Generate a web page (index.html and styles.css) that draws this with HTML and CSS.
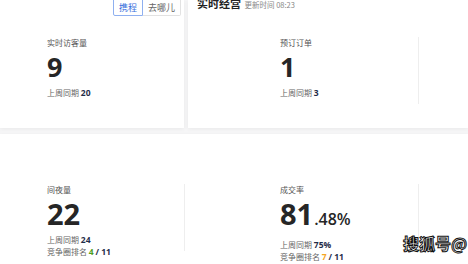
FILE: index.html
```html
<!DOCTYPE html>
<html lang="zh">
<head>
  <meta charset="UTF-8" />
  <title>实时经营</title>
  <link rel="stylesheet" href="styles.css">
</head>
<body>
  <div class="top-row">
    <div class="card card-left">
      <div class="tabs">
        <button class="tab active">携程</button>
        <button class="tab">去哪儿</button>
      </div>
      <div class="stat stat-first">
        <div class="stat-label">实时访客量</div>
        <div class="stat-value">9</div>
        <div class="stat-sub">上周同期 <b>20</b></div>
      </div>
    </div>

    <div class="card card-right">
      <div class="card-title">实时经营 <span class="updated">更新时间 08:23</span></div>
      <div class="cols">
        <div class="col col-mid">
          <div class="stat">
            <div class="stat-label">预订订单</div>
            <div class="stat-value">1</div>
            <div class="stat-sub">上周同期 <b>3</b></div>
          </div>
        </div>
      </div>
    </div>
  </div>

  <div class="card card-bottom">
    <div class="col col-first">
      <div class="stat stat-first">
        <div class="stat-label">间夜量</div>
        <div class="stat-value">22</div>
        <div class="stat-sub">上周同期 <b>24</b></div>
        <div class="stat-sub">竞争圈排名 <b class="green">4</b> <b>/ 11</b></div>
      </div>
    </div>
    <div class="col col-mid">
      <div class="stat">
        <div class="stat-label">成交率</div>
        <div class="stat-value">81<small>.48%</small></div>
        <div class="stat-sub">上周同期 <b>75%</b></div>
        <div class="stat-sub">竞争圈排名 <b class="orange">7</b> <b>/ 11</b></div>
      </div>
    </div>
  </div>

  <div class="watermark">搜狐号@</div>
</body>
</html>
```

FILE: styles.css
```css
body {
  margin: 0;
  width: 468px;
  height: 264px;
  overflow: hidden;
  position: relative;
  background: #f6f6f7;
  font-family: "Noto Sans", "Noto Sans CJK SC", sans-serif;
  color: #333;
}
.top-row {
  display: flex;
  gap: 4px;
  height: 128px;
}
.card {
  background: #fff;
  box-shadow: 0 1px 4px rgba(0, 0, 0, 0.06);
}
.card-left {
  width: 184px;
  flex: none;
}
.card-right {
  flex: 1;
}
.tabs {
  display: flex;
  justify-content: flex-end;
  margin: -8px 3px 0 0;
}
.tab {
  font-family: "Noto Sans CJK SC", sans-serif;
  font-size: 9px;
  height: 24px;
  padding: 8px 5px 0;
  line-height: 12px;
  white-space: nowrap;
  background: #fff;
  border: 1px solid #e2e2e2;
  border-left: none;
  border-radius: 0 2px 2px 0;
  color: #666;
}
.tab.active {
  border: 1px solid #8fb0f0;
  color: #3a6fdc;
  border-radius: 2px 0 0 2px;
}
.card-title {
  font-family: "Noto Sans CJK SC", sans-serif;
  font-size: 11px;
  font-weight: bold;
  color: #222;
  margin: -5px 0 0 9px;
  line-height: 16px;
  white-space: nowrap;
}
.updated {
  font-size: 7.5px;
  font-weight: normal;
  color: #888;
  margin-left: 1px;
}
.cols {
  display: flex;
  margin-top: 24px;
}
.col {
  display: flex;
}
.col-mid {
  width: 231px;
  padding-left: 92px;
  box-sizing: border-box;
  border-right: 1px solid #eee;
  height: 67px;
}
.stat-first {
  padding-left: 47px;
}
.card-left .stat {
  padding-top: 21px;
}
.stat-label {
  font-family: "Noto Sans CJK SC", sans-serif;
  font-size: 8px;
  line-height: 12px;
  color: #555;
}
.stat-value {
  font-family: "Open Sans", "Noto Sans", sans-serif;
  font-weight: bold;
  font-size: 27px;
  line-height: 30px;
  margin-top: 3px;
  color: #262626;
}
.stat-value small {
  font-size: 16px;
  font-weight: 600;
  margin-left: 1px;
}
.stat-sub {
  font-family: "Noto Sans CJK SC", sans-serif;
  font-size: 8px;
  line-height: 12px;
  color: #666;
  margin-top: 5px;
}
.stat-sub b {
  font-family: "Open Sans", sans-serif;
  color: #1f2d4a;
  font-size: 8.5px;
}
.stat-sub + .stat-sub {
  margin-top: 0;
}
.stat-sub b.green {
  color: #4f9e1e;
}
.stat-sub b.orange {
  color: #f5a623;
}
.card-bottom {
  display: flex;
  margin-top: 6px;
  height: 130px;
  padding-top: 50px;
  box-sizing: border-box;
}
.col-first {
  width: 185px;
  box-sizing: border-box;
  border-right: 1px solid #eee;
  height: 67px;
}
.card-bottom .col-mid {
  width: 234px;
  padding-left: 95px;
  height: 67px;
}
.card-bottom .stat-value {
  font-size: 29px;
  line-height: 32px;
  margin-top: 2px;
}
.card-bottom .stat-sub {
  margin-top: 4px;
}
.card-bottom .stat-sub + .stat-sub {
  margin-top: 0;
}
.watermark {
  position: absolute;
  left: 403px;
  top: 231px;
  white-space: nowrap;
  font-family: "Noto Sans CJK SC", sans-serif;
  font-weight: bold;
  font-size: 16px;
  color: #fff;
  -webkit-text-stroke: 1px #111;
}
```
